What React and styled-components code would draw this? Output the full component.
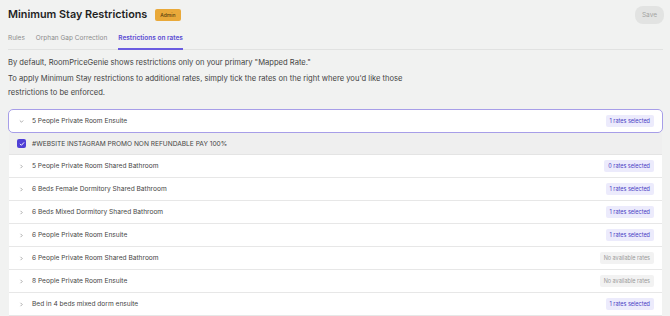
import React from 'react'
import styled, { createGlobalStyle } from 'styled-components'

const Global = createGlobalStyle`
  body {
    margin: 0;
    background: #f1f2f1;
    font-family: Inter, "Noto Sans", sans-serif;
    color: #2b2b2b;
  }
`

const Page = styled.div`
  padding: 0 7px 0 8px;
  height: 316px;
  overflow: hidden;
`

const Header = styled.div`
  display: flex;
  align-items: center;
  justify-content: space-between;
  height: 29px;
`

const TitleWrap = styled.div`
  display: flex;
  align-items: center;
  gap: 8px;
`

const Title = styled.h1`
  margin: 0;
  font-size: 10.8px;
  font-weight: 600;
  color: #1f1f1f;
`

const Badge = styled.span`
  background: #e9a93a;
  color: #5a3f0c;
  font-size: 5px;
  font-weight: 500;
  padding: 3px 5px;
  border-radius: 2px;
`

const SaveButton = styled.button`
  border: none;
  background: #e2e3e2;
  color: #a3a3a3;
  font-family: inherit;
  font-size: 6.5px;
  padding: 5px 7px;
  border-radius: 8px;
  margin-right: -1px;
`

const Tabs = styled.div`
  display: flex;
  gap: 11px;
  border-bottom: 1px solid #e1e2e1;
  height: 20px;
`

const Tab = styled.div`
  font-size: 6.5px;
  padding-top: 5px;
  color: ${p => (p.active ? '#5a4bd3' : '#8c8c8c')};
  font-weight: ${p => (p.active ? 600 : 400)};
  border-bottom: 2px solid ${p => (p.active ? '#6a5ce0' : 'transparent')};
  margin-bottom: -1px;
`

const Text = styled.p`
  margin: 0;
  font-size: 7.6px;
  line-height: 14px;
  color: #444;
  max-width: 400px;
`

const Intro = styled.div`
  display: flex;
  flex-direction: column;
  gap: 2px;
  padding-top: 6px;
  margin-bottom: 9px;
`

const List = styled.div`
  display: flex;
  flex-direction: column;
`

const Row = styled.div`
  display: flex;
  align-items: center;
  height: 22px;
  padding: 0 8px 0 9px;
  background: #fff;
  border: ${p => (p.open ? '1px solid #a79ee8' : 'none')};
  border-bottom: 1px solid ${p => (p.open ? '#a79ee8' : '#e7e7e7')};
  border-radius: ${p => (p.open ? '5px' : '0')};
  margin: ${p => (p.open ? '0' : '0 1px')};
`

const Chevron = styled.svg`
  width: 7px;
  height: 7px;
  margin-right: 7px;
  flex-shrink: 0;
`

const Label = styled.span`
  flex: 1;
  font-size: 6.6px;
  color: #454545;
`

const Pill = styled.span`
  font-size: 5.5px;
  padding: 3px 4px;
  border-radius: 2px;
  background: ${p => (p.muted ? '#f2f2f2' : '#ecebfc')};
  color: ${p => (p.muted ? '#9a9a9a' : '#4a3dc4')};
`

const SubRow = styled.div`
  display: flex;
  align-items: center;
  height: 21px;
  padding: 0 9px 0 8px;
  margin: 0 1px;
  background: #efefef;
  border-bottom: 1px solid #e4e4e4;
`

const Check = styled.span`
  width: 9px;
  height: 9px;
  border-radius: 2px;
  background: #4f3fd6;
  display: flex;
  align-items: center;
  justify-content: center;
  margin-right: 6px;
`

const rooms = [
  ['5 People Private Room Shared Bathroom', '0 rates selected'],
  ['6 Beds Female Dormitory Shared Bathroom', '1 rates selected'],
  ['6 Beds Mixed Dormitory Shared Bathroom', '1 rates selected'],
  ['6 People Private Room Ensuite', '1 rates selected'],
  ['6 People Private Room Shared Bathroom', null],
  ['8 People Private Room Ensuite', null],
  ['Bed in 4 beds mixed dorm ensuite', '1 rates selected'],
]

function Arrow({ down }) {
  return (
    <Chevron viewBox="0 0 10 10">
      <path
        d={down ? 'M3 4l2 2 2-2' : 'M4 3l2 2-2 2'}
        fill="none"
        stroke="#8a8a8a"
        strokeWidth="1"
        strokeLinecap="round"
        strokeLinejoin="round"
      />
    </Chevron>
  )
}

export default function App() {
  return (
    <Page>
      <Global />
      <Header>
        <TitleWrap>
          <Title>Minimum Stay Restrictions</Title>
          <Badge>Admin</Badge>
        </TitleWrap>
        <SaveButton>Save</SaveButton>
      </Header>
      <Tabs>
        <Tab>Rules</Tab>
        <Tab>Orphan Gap Correction</Tab>
        <Tab active>Restrictions on rates</Tab>
      </Tabs>
      <Intro>
        <Text>By default, RoomPriceGenie shows restrictions only on your primary "Mapped Rate."</Text>
        <Text>
          To apply Minimum Stay restrictions to additional rates, simply tick the rates on the right where you'd like those
          restrictions to be enforced.
        </Text>
      </Intro>
      <List>
        <Row open>
          <Arrow down />
          <Label>5 People Private Room Ensuite</Label>
          <Pill>1 rates selected</Pill>
        </Row>
        <SubRow>
          <Check>
            <svg width="6" height="6" viewBox="0 0 10 10">
              <path d="M2 5.2l2 2 4-4.4" fill="none" stroke="#fff" strokeWidth="1.6" strokeLinecap="round" strokeLinejoin="round" />
            </svg>
          </Check>
          <Label>#WEBSITE INSTAGRAM PROMO NON REFUNDABLE PAY 100%</Label>
        </SubRow>
        {rooms.map(([name, pill]) => (
          <Row key={name}>
            <Arrow />
            <Label>{name}</Label>
            {pill ? <Pill>{pill}</Pill> : <Pill muted>No available rates</Pill>}
          </Row>
        ))}
      </List>
    </Page>
  )
}
